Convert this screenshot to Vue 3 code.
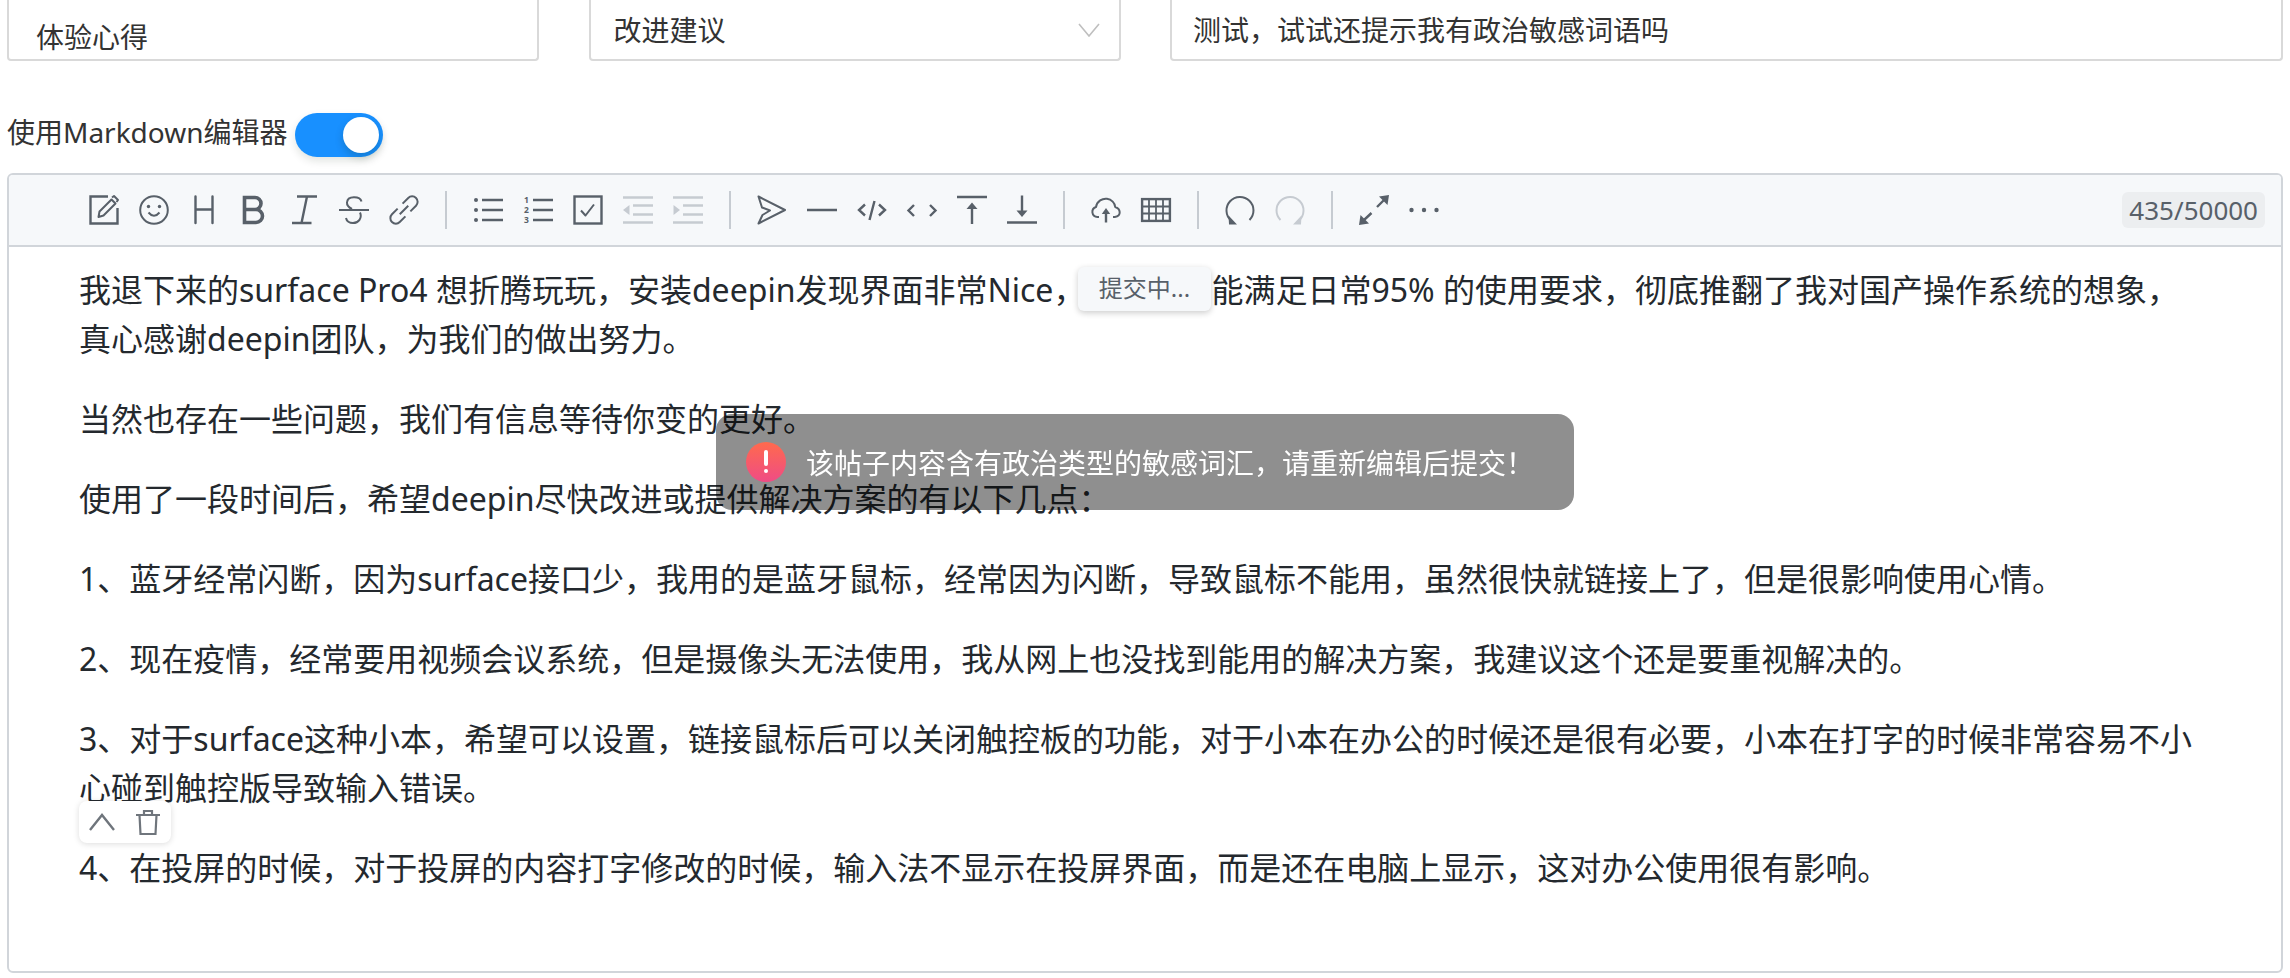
<script setup>
const paragraphsAfter = [
  '当然也存在一些问题，我们有信息等待你变的更好。',
  '使用了一段时间后，希望deepin尽快改进或提供解决方案的有以下几点：',
  '1、蓝牙经常闪断，因为surface接口少，我用的是蓝牙鼠标，经常因为闪断，导致鼠标不能用，虽然很快就链接上了，但是很影响使用心情。',
  '2、现在疫情，经常要用视频会议系统，但是摄像头无法使用，我从网上也没找到能用的解决方案，我建议这个还是要重视解决的。',
  '3、对于surface这种小本，希望可以设置，链接鼠标后可以关闭触控板的功能，对于小本在办公的时候还是很有必要，小本在打字的时候非常容易不小心碰到触控版导致输入错误。',
  '4、在投屏的时候，对于投屏的内容打字修改的时候，输入法不显示在投屏界面，而是还在电脑上显示，这对办公使用很有影响。'
]
</script>

<template>
  <div class="page">
    <div class="fields">
      <div class="field field-low">体验心得</div>
      <div class="field field-select">
        <span>改进建议</span>
        <svg class="chev" width="22" height="14" viewBox="0 0 22 14"><path d="M1 1 L11 13 L21 1" fill="none" stroke="#bfbfbf" stroke-width="1.6"/></svg>
      </div>
      <div class="field field-title">测试，试试还提示我有政治敏感词语吗</div>
    </div>

    <div class="switch-row">
      <span class="switch-label">使用Markdown编辑器</span>
      <span class="switch"><span class="knob"></span></span>
    </div>

    <div class="editor">
      <div class="toolbar">
        <span class="btn"><svg viewBox="0 0 30 30"><path class="s" d="M19 1.5H1.5V28.5H28.5V13"/><path class="t" d="M10.5 16.5L22.5 4.5L26.5 8.5L14.5 20.5L9.5 22Z"/><path class="t" d="M23 2.5L25 1L29 5L27.5 7"/></svg></span>
        <span class="btn"><svg viewBox="0 0 30 30"><circle class="t" cx="15" cy="15" r="13.8"/><circle class="f" cx="9.5" cy="11.5" r="1.7"/><circle class="f" cx="20.5" cy="11.5" r="1.7"/><path class="t" d="M9.5 17.5Q15 24 20.5 17.5"/></svg></span>
        <span class="btn"><svg viewBox="0 0 30 30"><path class="s r" stroke-width="3" d="M6.5 1.5V28M23.5 1.5V28M6.5 14.5H23.5"/></svg></span>
        <span class="btn"><svg viewBox="0 0 30 30"><path class="s bold" d="M5.5 2.5H16A6 6 0 0 1 16 14.5H5.5ZM5.5 14.5H17A6.5 6.5 0 0 1 17 27.5H5.5Z"/></svg></span>
        <span class="btn"><svg viewBox="0 0 30 30"><path class="s" stroke-width="3" d="M8 1.5H28M3 28H22.5M18 1.5L12.5 28"/></svg></span>
        <span class="btn"><svg viewBox="0 0 30 30"><path class="t" d="M0 15H30"/><path class="t" stroke-width="2.4" d="M22.5 6.5C21 1 8.5 0.5 8 7.5C7.7 11 10 12.5 13 14M21 17.5C23.5 23 19.5 28 14 28C10.5 28 7.5 26 7 23"/></svg></span>
        <span class="btn"><svg viewBox="0 0 30 30"><g transform="rotate(-45 15 15)"><path class="t" stroke-width="2.4" d="M11.5 9.5H3.5a5.5 5.5 0 0 0 0 11H11.5M18.5 9.5H26.5a5.5 5.5 0 0 1 0 11H18.5M9 15H21"/></g></svg></span>
        <span class="divider"></span>
        <span class="btn"><svg viewBox="0 0 30 30"><circle class="f" cx="3" cy="5" r="2"/><circle class="f" cx="3" cy="15" r="2"/><circle class="f" cx="3" cy="25" r="2"/><path class="s" stroke-width="2.5" d="M9 5H30M9 15H30M9 25H30"/></svg></span>
        <span class="btn"><svg viewBox="0 0 30 30"><text class="num" x="3.5" y="8">1</text><text class="num" x="3.5" y="18">2</text><text class="num" x="3.5" y="28">3</text><path class="s" stroke-width="2.5" d="M10 5H30M10 15H30M10 25H30"/></svg></span>
        <span class="btn"><svg viewBox="0 0 30 30"><rect class="s" stroke-width="2.6" x="1.5" y="1.5" width="27" height="27"/><path class="t" stroke-width="2.2" d="M8 15.5L12.5 20.5L21 9.5"/></svg></span>
        <span class="btn off"><svg viewBox="0 0 30 30"><path class="s" stroke-width="2.6" d="M0 2.5H30M10 10.5H30M10 19.5H30M0 27.5H30"/><path class="f" d="M0 15L6.5 10V20Z"/></svg></span>
        <span class="btn off"><svg viewBox="0 0 30 30"><path class="s" stroke-width="2.6" d="M0 2.5H30M10 10.5H30M10 19.5H30M0 27.5H30"/><path class="f" d="M7 15L0.5 10V20Z"/></svg></span>
        <span class="divider"></span>
        <span class="btn"><svg viewBox="0 0 30 30"><path class="t" stroke-width="2.3" d="M1.5 1.5L28 15L1.5 28.5L5.5 20L13 15.5L5 12.5Z"/></svg></span>
        <span class="btn"><svg viewBox="0 0 30 30"><path class="s" stroke-width="2.5" d="M0 15H30"/></svg></span>
        <span class="btn"><svg viewBox="0 0 30 30"><path class="s" stroke-width="2.5" d="M8 9.5L2 15L8 20.5M22 9.5L28 15L22 20.5M17.5 6L12.5 25"/></svg></span>
        <span class="btn"><svg viewBox="0 0 30 30"><path class="s" stroke-width="2.8" d="M7 10L1.5 15.5L7 21M23 10L28.5 15.5L23 21"/></svg></span>
        <span class="btn"><svg viewBox="0 0 30 30"><path class="s" stroke-width="3" d="M0 2H30"/><path class="s" stroke-width="2.4" d="M15 12V29"/><path class="f" d="M15 7.5L9.5 14H20.5Z"/></svg></span>
        <span class="btn"><svg viewBox="0 0 30 30"><path class="s" stroke-width="3" d="M0 27.5H30"/><path class="s" stroke-width="2.4" d="M15 0.5V17"/><path class="f" d="M15 22L9.5 15.5H20.5Z"/></svg></span>
        <span class="divider"></span>
        <span class="btn"><svg viewBox="0 0 30 30"><path class="t" stroke-width="2.3" d="M8 22H6.5C0.5 21.5 -0.5 14 5 12C6 6 11.5 3.2 16 3.8C20.5 4.4 24 8 24.2 12C29.5 13.5 31 21 23.8 22H22"/><path class="s" stroke-width="2.2" d="M15 18V27.5"/><path class="f" d="M15 13L10.8 19H19.2Z"/></svg></span>
        <span class="btn"><svg viewBox="0 0 30 30"><rect class="s" stroke-width="2.2" x="1.1" y="4.1" width="27.8" height="21.8"/><path class="s thin" d="M8 4V26M15 4V26M22 4V26M1 11.5H29M1 18.5H29"/></svg></span>
        <span class="divider"></span>
        <span class="btn"><svg viewBox="0 0 30 30"><path class="t" stroke-width="3" d="M24.5 25A13.5 13.5 0 1 0 6 25.5"/><path class="f" d="M3.5 20.5L12 29.5H4Z"/></svg></span>
        <span class="btn off"><svg viewBox="0 0 30 30"><path class="t" stroke-width="3" d="M5.5 25A13.5 13.5 0 1 1 24 25.5"/><path class="f" d="M26.5 20.5L18 29.5H26Z"/></svg></span>
        <span class="divider"></span>
        <span class="btn"><svg viewBox="0 0 30 30"><path class="s" stroke-width="3.2" d="M18 12L25 5M12.5 18L5 25"/><path class="f" d="M20 1.5L30 0L28.5 10Z"/><path class="f" d="M1.5 20L0 30L10 28.5Z"/></svg></span>
        <span class="btn"><svg viewBox="0 0 30 30"><circle class="f" cx="2.5" cy="15" r="2.2"/><circle class="f" cx="15" cy="15" r="2.2"/><circle class="f" cx="27.5" cy="15" r="2.2"/></svg></span>
        <span class="counter">435/50000</span>
      </div>

      <div class="content">
        <p>我退下来的surface Pro4 想折腾玩玩，安装deepin发现界面非常Nice，<span class="gap"></span>能满足日常95% 的使用要求，彻底推翻了我对国产操作系统的想象，真心感谢deepin团队，为我们的做出努力。</p>
        <p v-for="(text, i) in paragraphsAfter" :key="i">{{ text }}</p>

        <div class="hint">提交中...</div>

        <div class="block-tools">
          <svg width="26" height="18" viewBox="0 0 26 18"><path d="M1 17L13 2L25 17" fill="none" stroke="#6f757c" stroke-width="2.4"/></svg>
          <svg width="26" height="26" viewBox="0 0 26 26"><path d="M1 6H25M9 6V2H17V6M4.5 6L5.5 25H20.5L21.5 6" fill="none" stroke="#6f757c" stroke-width="2.2"/></svg>
        </div>
      </div>
    </div>

    <div class="toast">
      <span class="toast-icon"><i class="bang"></i><i class="dot"></i></span>
      <span class="toast-text">该帖子内容含有政治类型的敏感词汇，请重新编辑后提交！</span>
    </div>
  </div>
</template>

<style>
html, body { margin: 0; background: #fff; overflow: hidden; }
</style>

<style scoped>
.page {
  width: 2290px;
  height: 978px;
  box-sizing: border-box;
  padding: 0 7px;
  overflow: hidden;
  font-family: "Noto Sans", "Noto Sans CJK SC", sans-serif;
  color: #24292e;
  background: #fff;
}
.fields {
  display: grid;
  grid-template-columns: 532px 532px 1fr;
  column-gap: 49.5px;
  height: 61px;
}
.field {
  box-sizing: border-box;
  height: 61px;
  border: 2px solid #d9d9d9;
  border-top: none;
  border-radius: 0 0 4px 4px;
  padding: 10px 20px 0;
  font-size: 28px;
  line-height: 40px;
  color: #333;
}
.field-low { padding-top: 17px; padding-left: 27px; }
.field-title { padding-left: 21px; }
.field-select {
  display: flex;
  justify-content: space-between;
  align-items: flex-start;
  padding-left: 23px;
  padding-right: 19px;
}
.chev { margin: 13px 0 0; }
.switch-row {
  display: flex;
  align-items: center;
  gap: 7px;
  height: 44px;
  margin: 52px 0 16px;
}
.switch-label { font-size: 28px; color: #333; padding-bottom: 8px; }
.switch {
  position: relative;
  width: 88px;
  height: 44px;
  border-radius: 22px;
  background: #1890ff;
  box-shadow: 0 4px 8px rgba(0, 35, 11, 0.12);
}
.knob {
  position: absolute;
  top: 4px;
  right: 4px;
  width: 36px;
  height: 36px;
  border-radius: 50%;
  background: #fff;
  box-shadow: 0 4px 8px rgba(0, 35, 11, 0.2);
}
.editor {
  height: 800px;
  box-sizing: border-box;
  border: 2px solid #d1d5da;
  border-radius: 6px;
  overflow: hidden;
}
.toolbar {
  display: flex;
  align-items: center;
  box-sizing: border-box;
  height: 72px;
  padding-left: 70px;
  background: #f6f8fa;
  border-bottom: 2px solid #d1d5da;
}
.btn { display: flex; padding: 0 10px; color: #586069; }
.btn.off { color: #c6cbd1; }
.btn svg { width: 30px; height: 30px; overflow: visible; display: block; }
.s { fill: none; stroke: currentColor; stroke-width: 2.4; }
.bold { stroke-width: 3.6; }
.thin { stroke-width: 1.8; }
.t { fill: none; stroke: currentColor; stroke-width: 2; stroke-linejoin: round; }
.r { stroke-linecap: round; }
.f { fill: currentColor; }
.num { fill: currentColor; font-size: 8.5px; font-weight: 700; font-family: "Noto Sans", sans-serif; text-anchor: middle; }
.divider {
  width: 2px;
  height: 38px;
  margin: 0 16px;
  background: #c6cbd1;
}
.counter {
  margin-left: auto;
  margin-right: 16px;
  height: 36px;
  line-height: 36px;
  padding: 0 7px;
  border-radius: 6px;
  background: #eceef0;
  color: #586069;
  font-size: 26px;
}
.content {
  position: relative;
  padding: 18px 82px 0 70px;
  font-size: 32px;
  line-height: 49px;
}
.content p { margin: 0 0 31px; }
.gap { display: inline-block; width: 126px; }
.hint {
  position: absolute;
  left: 1069px;
  top: 20px;
  width: 133px;
  height: 44px;
  line-height: 42px;
  text-align: center;
  font-size: 24px;
  color: #586069;
  background: #f6f8fa;
  border-radius: 6px;
  box-shadow: 0 2px 6px rgba(0, 0, 0, 0.2);
}
.block-tools {
  position: absolute;
  left: 70px;
  top: 554px;
  width: 92px;
  height: 42px;
  box-sizing: border-box;
  padding: 8px 10px 0;
  display: flex;
  justify-content: space-between;
  align-items: flex-start;
  background: #fff;
  border-radius: 8px;
  box-shadow: 0 1px 6px rgba(0, 0, 0, 0.14);
}
.block-tools svg:first-child { margin-top: 4px; }
.toast {
  position: fixed;
  left: 50%;
  top: 414px;
  transform: translateX(-50%);
  display: flex;
  align-items: center;
  box-sizing: border-box;
  width: 858px;
  height: 96px;
  padding: 0 30px;
  gap: 20px;
  border-radius: 16px;
  background: rgba(0, 0, 0, 0.44);
  color: #fff;
  font-size: 28px;
  white-space: nowrap;
}
.toast-icon {
  position: relative;
  flex: none;
  width: 40px;
  height: 40px;
  border-radius: 50%;
  background: linear-gradient(180deg, #ff6a4d, #ef4c85);
}
.bang {
  position: absolute;
  left: 18px;
  top: 8px;
  width: 4px;
  height: 16px;
  border-radius: 2px;
  background: #fff;
}
.dot {
  position: absolute;
  left: 18px;
  top: 27px;
  width: 4px;
  height: 4px;
  border-radius: 50%;
  background: #fff;
}
</style>
